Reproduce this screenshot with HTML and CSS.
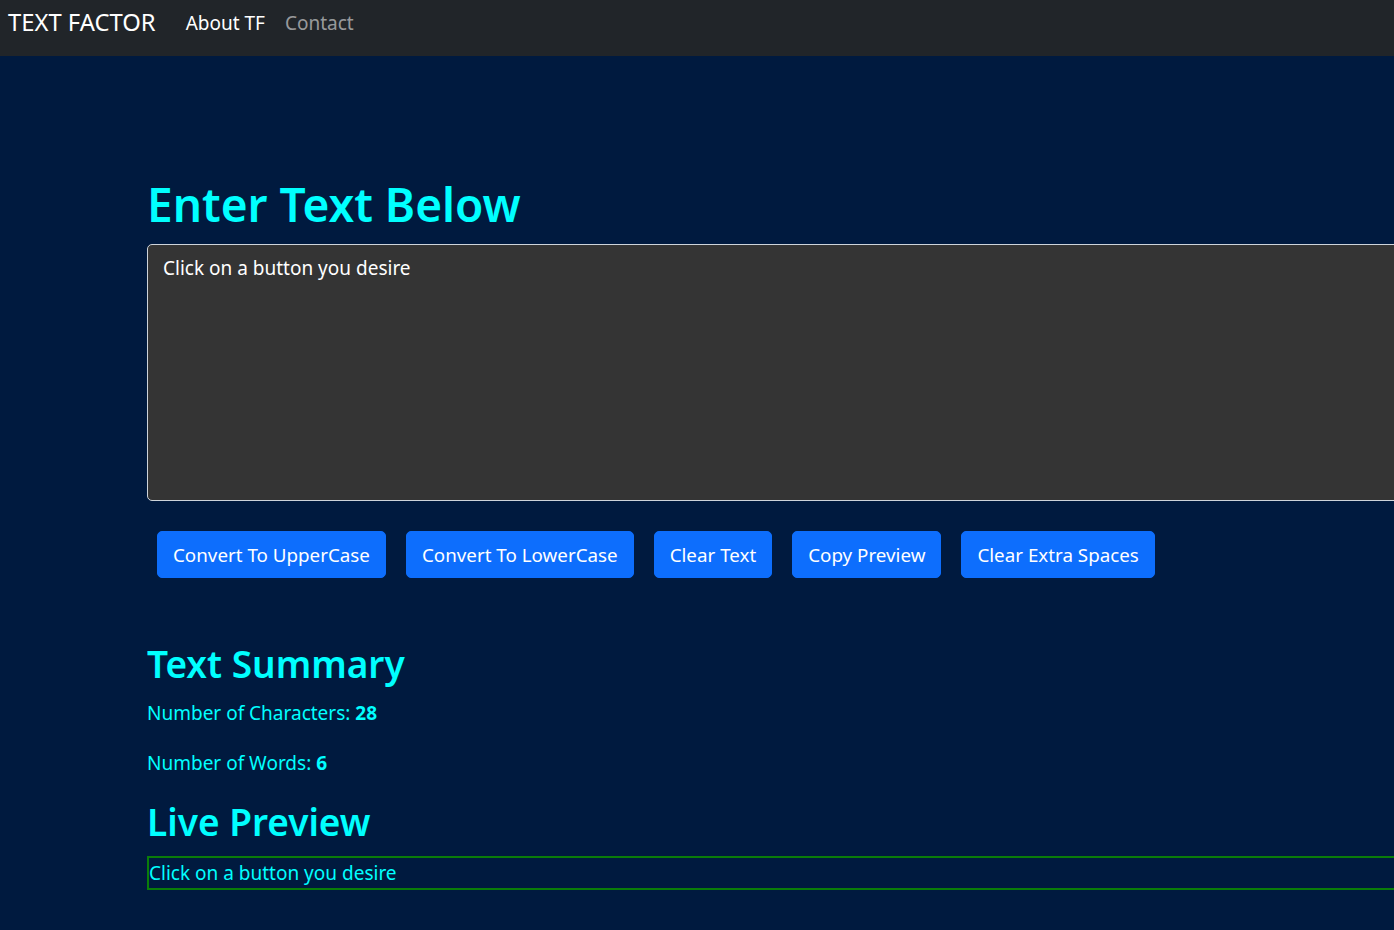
FILE: index.html
```html
<!DOCTYPE html>
<html lang="en">
<head>
<meta charset="utf-8">
<title>TEXT FACTOR</title>
<link rel="stylesheet" href="styles.css">
</head>
<body>
<nav class="navbar">
  <a class="brand" href="#">TEXT FACTOR</a>
  <a class="nav-link active" href="#">About TF</a>
  <a class="nav-link" href="#">Contact</a>
</nav>
<main class="container">
  <h1 class="title">Enter Text Below</h1>
  <textarea class="text-input" rows="8">Click on a button you desire</textarea>
  <div class="actions">
    <button class="btn">Convert To UpperCase</button>
    <button class="btn">Convert To LowerCase</button>
    <button class="btn">Clear Text</button>
    <button class="btn">Copy Preview</button>
    <button class="btn">Clear Extra Spaces</button>
  </div>
  <section class="summary">
    <h2 class="subtitle">Text Summary</h2>
    <p class="stat">Number of Characters: <b>28</b></p>
    <p class="stat">Number of Words: <b>6</b></p>
    <h2 class="subtitle">Live Preview</h2>
    <p class="preview">Click on a button you desire</p>
  </section>
</main>
</body>
</html>
```

FILE: styles.css
```css
html, body {
  overflow: hidden;
}
body {
  margin: 0;
  background: #001a3f;
  font-family: "Noto Sans", "Open Sans", sans-serif;
  color: #00ffff;
}
.navbar {
  height: 56px;
  background: #212529;
  display: flex;
  align-items: center;
  padding: 0 8px 10px;
  box-sizing: border-box;
}
.brand {
  font-size: 23.8px;
  color: #fff;
  text-decoration: none;
  margin-right: 20px;
  line-height: 1;
}
.nav-link {
  font-size: 19px;
  color: rgba(255, 255, 255, 0.55);
  text-decoration: none;
  padding: 0 10px;
  line-height: 1;
}
.nav-link.active {
  color: #fff;
}
.container {
  padding: 118px 0 0 147px;
  width: 1400px;
}
.title {
  font-size: 46px;
  font-weight: 600;
  line-height: 60px;
  margin: 0 0 10px;
}
.text-input {
  display: block;
  box-sizing: border-box;
  width: 100%;
  height: 257px;
  margin: 0 0 20px;
  padding: 7.5px 15px;
  background: #343434;
  color: #fff;
  border: 1px solid #ced4da;
  border-radius: 5px;
  font-family: inherit;
  font-size: 19px;
  line-height: 30px;
  resize: none;
}
.actions {
  display: flex;
}
.btn {
  margin: 10px;
  padding: 7.5px 15px;
  background: #0d6efd;
  color: #fff;
  border: 1.25px solid #0d6efd;
  border-radius: 5px;
  font-family: inherit;
  font-size: 18.8px;
  line-height: 30px;
}
.summary {
  margin-top: 52px;
}
.subtitle {
  font-size: 37px;
  font-weight: 600;
  line-height: 48px;
  margin: 0 0 10px;
}
.stat {
  font-size: 19px;
  line-height: 30px;
  margin: 0 0 20px;
}
.preview {
  font-size: 19px;
  line-height: 30px;
  margin: 0;
  border: 2px solid #0a7d0a;
}
```
